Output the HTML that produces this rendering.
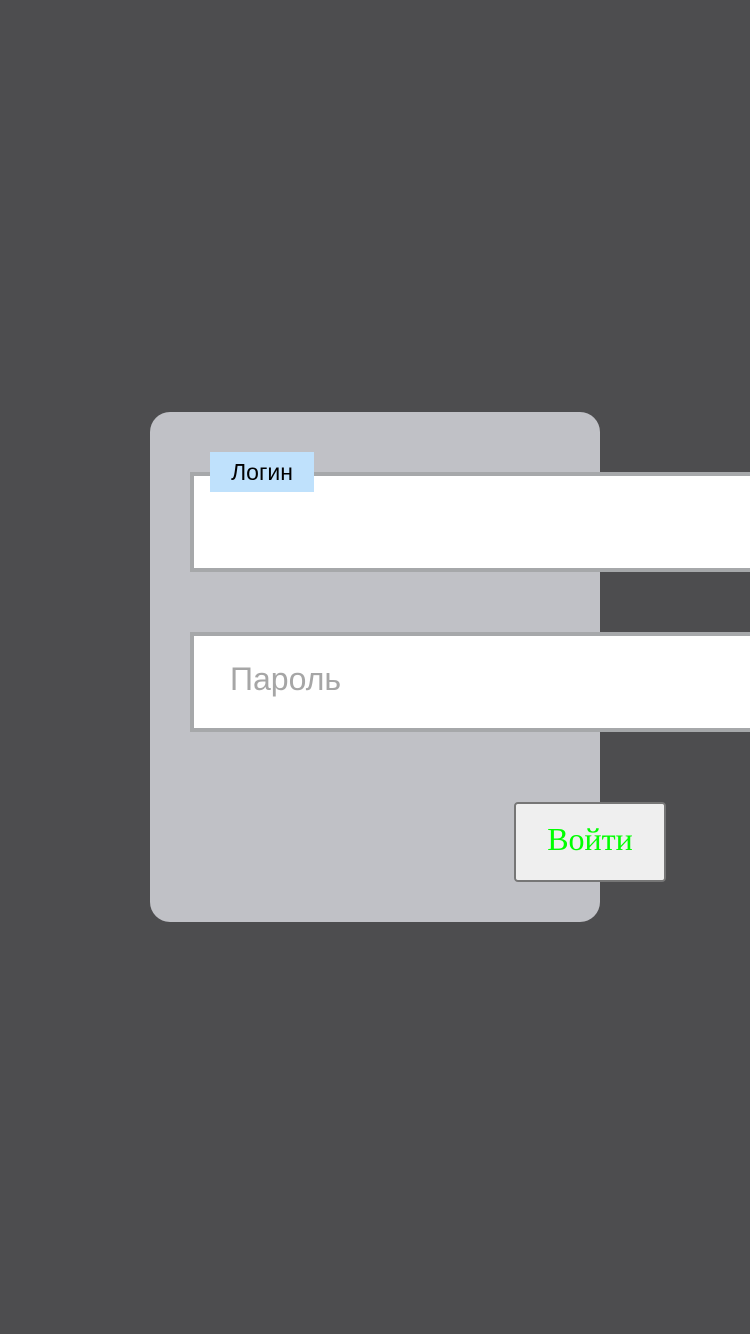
<!DOCTYPE html>
<html><head><meta charset="utf-8"><style>
html,body{margin:0;padding:0;width:750px;height:1334px;background:#4d4d4f;overflow:hidden;position:relative;font-family:"Liberation Sans",sans-serif}
.card{position:absolute;left:150px;top:412px;width:450px;height:510px;background:#c0c1c6;border-radius:20px}
.inp{position:absolute;left:190px;width:600px;height:92px;border:4px solid #a6a8aa;background:#fff;box-sizing:content-box}
.lbl{position:absolute;left:210px;top:452px;width:104px;height:40px;background:#bfe1fc;font-size:23px;line-height:40px;text-align:center;color:#000}
.ph{position:absolute;left:230px;top:658px;font-size:32px;line-height:42px;color:#a6a6a6}
.btn{position:absolute;left:514px;top:802px;width:148px;height:76px;border:2px solid #767676;border-radius:4px;background:#efefef;color:#00ff00;font-family:"Liberation Serif",serif;font-size:32px;line-height:70px;text-align:center}
</style></head><body>
<div class="card"></div>
<div class="inp" style="top:472px"></div>
<div class="lbl">Логин</div>
<div class="inp" style="top:632px"></div>
<div class="ph">Пароль</div>
<div class="btn">Войти</div>
</body></html>
